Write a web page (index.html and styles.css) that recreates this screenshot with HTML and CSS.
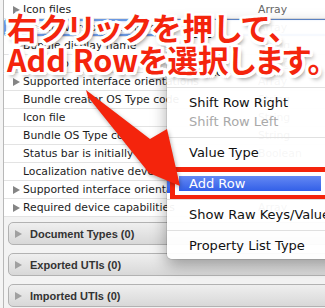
FILE: index.html
```html
<!doctype html>
<html lang="ja">
<head>
<meta charset="utf-8">
<title>Info.plist</title>
<link rel="stylesheet" href="styles.css">
</head>
<body>

<div id="editor">
  <div class="plist">
    <div class="row"><span class="key"><i class="tri"></i>Icon files</span><span class="type">Array</span></div>
    <div class="row editing"><span class="key"><i class="tri none"></i>Bundle versions string, short</span><span class="type">Array</span></div>
    <div class="row"><span class="key"><i class="tri none"></i>Bundle display name</span><span class="type">String</span></div>
    <div class="row"><span class="key"><i class="tri none"></i>Main nib file base name</span><span class="type">String</span></div>
    <div class="row"><span class="key"><i class="tri"></i>Supported interface orientations</span><span class="type">Array</span></div>
    <div class="row"><span class="key"><i class="tri none"></i>Bundle creator OS Type code</span><span class="type">String</span></div>
    <div class="row"><span class="key"><i class="tri none"></i>Icon file</span><span class="type">String</span></div>
    <div class="row"><span class="key"><i class="tri none"></i>Bundle OS Type code</span><span class="type">String</span></div>
    <div class="row"><span class="key"><i class="tri none"></i>Status bar is initially hidden</span><span class="type">Boolean</span></div>
    <div class="row"><span class="key"><i class="tri none"></i>Localization native development region</span><span class="type">String</span></div>
    <div class="row"><span class="key"><i class="tri"></i>Supported interface orientations (iPad)</span><span class="type">Array</span></div>
    <div class="row"><span class="key"><i class="tri"></i>Required device capabilities</span><span class="type">Array</span></div>
  </div>

  <div class="groups">
    <div class="group"><i class="tri"></i>Document Types (0)</div>
    <div class="group"><i class="tri"></i>Exported UTIs (0)</div>
    <div class="group"><i class="tri"></i>Imported UTIs (0)</div>
  </div>
</div>

<ul class="menu">
  <li>Cut</li>
  <li>Copy</li>
  <li>Paste</li>
  <li class="sep"></li>
  <li>Shift Row Right</li>
  <li class="disabled">Shift Row Left</li>
  <li class="sep"></li>
  <li>Value Type</li>
  <li class="sep"></li>
  <li class="active marked">Add Row</li>
  <li class="sep"></li>
  <li>Show Raw Keys/Values</li>
  <li class="sep"></li>
  <li>Property List Type</li>
</ul>

<svg class="arrow" width="325" height="308" viewBox="0 0 325 308">
  <polygon points="86,90 150,139 167,129 180,186 149,173 88,97" fill="#f4240c"/>
</svg>

<div class="callout">
  <div class="line wide">右クリックを押して、</div>
  <div class="line">Add Rowを選択します。</div>
</div>

</body>
</html>
```

FILE: styles.css
```css
* {
  box-sizing: border-box;
}
html, body {
  margin: 0;
}
body {
  width: 325px;
  height: 308px;
  overflow: hidden;
  position: relative;
  background: #f4f4f4;
  font-family: "DejaVu Sans", sans-serif;
}

#editor {
  margin-left: 3px;
  height: 308px;
  border-left: 1px solid #b8b8b8;
  background: #f3f3f3;
}

.plist {
  background: #fff;
  padding-top: 1px;
}
.row {
  display: flex;
  align-items: center;
  height: 18px;
  margin-right: -20px;
  border-bottom: 1px solid #e3e3e3;
  font-size: 10.8px;
  color: #1c1c1c;
  white-space: nowrap;
}
.row.editing {
  border-radius: 3px;
  box-shadow: inset 0 0 0 2px #6a98e2, inset 0 0 2px 3px rgba(120, 160, 230, 0.35);
}
.key {
  width: 254px;
  display: flex;
  align-items: center;
  overflow: hidden;
  padding-left: 9px;
}
.type {
  color: #666;
}

.tri {
  flex: none;
  width: 0;
  height: 0;
  margin-right: 3px;
  border-left: 7px solid #858585;
  border-top: 4px solid transparent;
  border-bottom: 4px solid transparent;
}
.tri.none {
  visibility: hidden;
}

.groups {
  display: flex;
  flex-direction: column;
  gap: 8px;
  padding: 5px 0 0 4px;
}
.group {
  height: 23px;
  margin-right: -20px;
  display: flex;
  align-items: center;
  padding-left: 6px;
  border: 1px solid #b2b2b2;
  border-radius: 5px;
  background: linear-gradient(#efefef, #d8d8d8);
  font-family: "Liberation Sans", sans-serif;
  font-weight: bold;
  font-size: 11px;
  color: #333;
}
.group .tri {
  margin-right: 8px;
  border-left-color: #a0a0a0;
}

/* context menu */
.menu {
  position: absolute;
  left: 167px;
  top: 20px;
  width: 180px;
  margin: 0;
  padding: 4px 0;
  list-style: none;
  background: rgba(255, 255, 255, 0.94);
  border-radius: 0 0 5px 5px;
  box-shadow: 0 0 0 1px rgba(0, 0, 0, 0.08), 0 6px 16px rgba(0, 0, 0, 0.35);
  font-size: 13px;
  color: #111;
}
.menu li {
  position: relative;
  height: 19px;
  line-height: 19px;
  padding-left: 22px;
  white-space: nowrap;
}
.menu li.sep {
  height: 12px;
}
.menu li.sep::before {
  content: "";
  position: absolute;
  left: 0;
  right: 0;
  top: 6px;
  border-top: 1px solid #e0e0e0;
}
.menu li.disabled {
  color: #a9a9a9;
}
.menu li.active {
  color: #fff;
  background: linear-gradient(#6b8ef5, #2c5ae6);
}
.menu li.marked::after {
  content: "";
  position: absolute;
  left: 3px;
  top: -7px;
  bottom: -7px;
  width: 150px;
  border: 5px solid #f4240c;
  box-shadow: inset 0 0 0 4px #fff;
}

/* annotation */
.arrow {
  position: absolute;
  left: 0;
  top: 0;
  filter: drop-shadow(1px 2px 2px rgba(0, 0, 0, 0.3));
}
.callout {
  position: absolute;
  left: 7px;
  top: 11px;
  font-family: "Noto Sans CJK JP", sans-serif;
  font-weight: bold;
  font-size: 30.5px;
  line-height: 32px;
  font-feature-settings: "palt";
  color: #f4240c;
  white-space: nowrap;
  text-shadow:
    3px 0 0 #fff, -3px 0 0 #fff, 0 3px 0 #fff, 0 -3px 0 #fff,
    2px 2px 0 #fff, -2px -2px 0 #fff, 2px -2px 0 #fff, -2px 2px 0 #fff,
    3px 2px 0 #fff, -3px 2px 0 #fff, 2px 3px 0 #fff, -2px 3px 0 #fff,
    3px -2px 0 #fff, -3px -2px 0 #fff,
    3px 4px 4px rgba(0, 0, 0, 0.45);
}
.callout .wide {
  letter-spacing: 1.5px;
}
```
